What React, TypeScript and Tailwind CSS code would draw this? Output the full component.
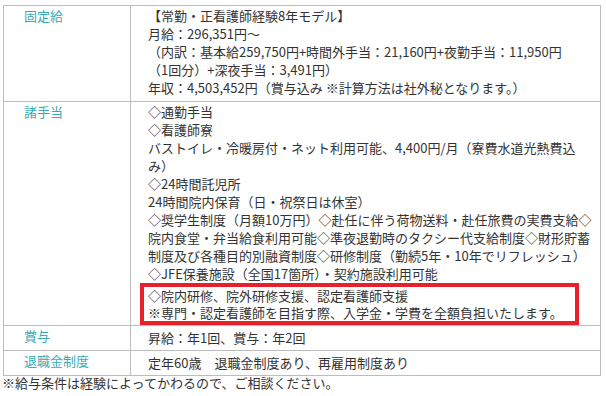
import React from "react";

const font = { fontFamily: '"Noto Sans CJK JP", "Noto Sans", sans-serif' };

function Label({ children }: { children: React.ReactNode }) {
  return (
    <div className="w-[127px] shrink-0 border-r border-[#bcbcbc] pl-[20px] pt-[1px] text-[#3aabb6]">
      {children}
    </div>
  );
}

function L({ children }: { children: React.ReactNode }) {
  return <div className="whitespace-nowrap">{children}</div>;
}

export default function App() {
  return (
    <div className="bg-white w-[606px] h-[396px] pt-[5px] pl-[3px] text-[13px] leading-[18px] text-[#333333]" style={font}>
      <div className="w-[598px] border border-[#bcbcbc]">
        <div className="flex border-b border-[#bcbcbc]">
          <Label>固定給</Label>
          <div className="flex-1 min-w-0 pl-[17px] pt-[1px] pb-[4px]">
            <L>【常勤・正看護師経験8年モデル】</L>
            <L>月給：296,351円～</L>
            <L>（内訳：基本給259,750円+時間外手当：21,160円+夜勤手当：11,950円</L>
            <L>（1回分）+深夜手当：3,491円）</L>
            <L>年収：4,503,452円（賞与込み ※計算方法は社外秘となります。）</L>
          </div>
        </div>
        <div className="flex border-b border-[#bcbcbc]">
          <Label>諸手当</Label>
          <div className="flex-1 min-w-0 pl-[17px] pt-[1px] pr-[21px]">
            <L>◇通勤手当</L>
            <L>◇看護師寮</L>
            <L>バストイレ・冷暖房付・ネット利用可能、4,400円/月（寮費水道光熱費込</L>
            <L>み）</L>
            <L>◇24時間託児所</L>
            <L>24時間院内保育（日・祝祭日は休室）</L>
            <L>◇奨学生制度（月額10万円）◇赴任に伴う荷物送料・赴任旅費の実費支給◇</L>
            <L>院内食堂・弁当給食利用可能◇準夜退勤時のタクシー代支給制度◇財形貯蓄</L>
            <L>制度及び各種目的別融資制度◇研修制度（勤続5年・10年でリフレッシュ）</L>
            <L>◇JFE保養施設（全国17箇所）・契約施設利用可能</L>
            <div className="-ml-[8px] border-[4px] border-[#e8202a] pl-[4px] leading-[17px]">
              <L>◇院内研修、院外研修支援、認定看護師支援</L>
              <L>※専門・認定看護師を目指す際、入学金・学費を全額負担いたします。</L>
            </div>
          </div>
        </div>
        <div className="flex border-b border-[#bcbcbc]">
          <Label>賞与</Label>
          <div className="flex-1 min-w-0 pl-[17px] pt-[3px] pb-[3px]">
            <L>昇給：年1回、賞与：年2回</L>
          </div>
        </div>
        <div className="flex">
          <Label>退職金制度</Label>
          <div className="flex-1 min-w-0 pl-[17px] pt-[3px] pb-[3px]">
            <L>定年60歳　退職金制度あり、再雇用制度あり</L>
          </div>
        </div>
      </div>
      <div className="-ml-[1px] -mt-[2px] whitespace-nowrap">※給与条件は経験によってかわるので、ご相談ください。</div>
    </div>
  );
}
